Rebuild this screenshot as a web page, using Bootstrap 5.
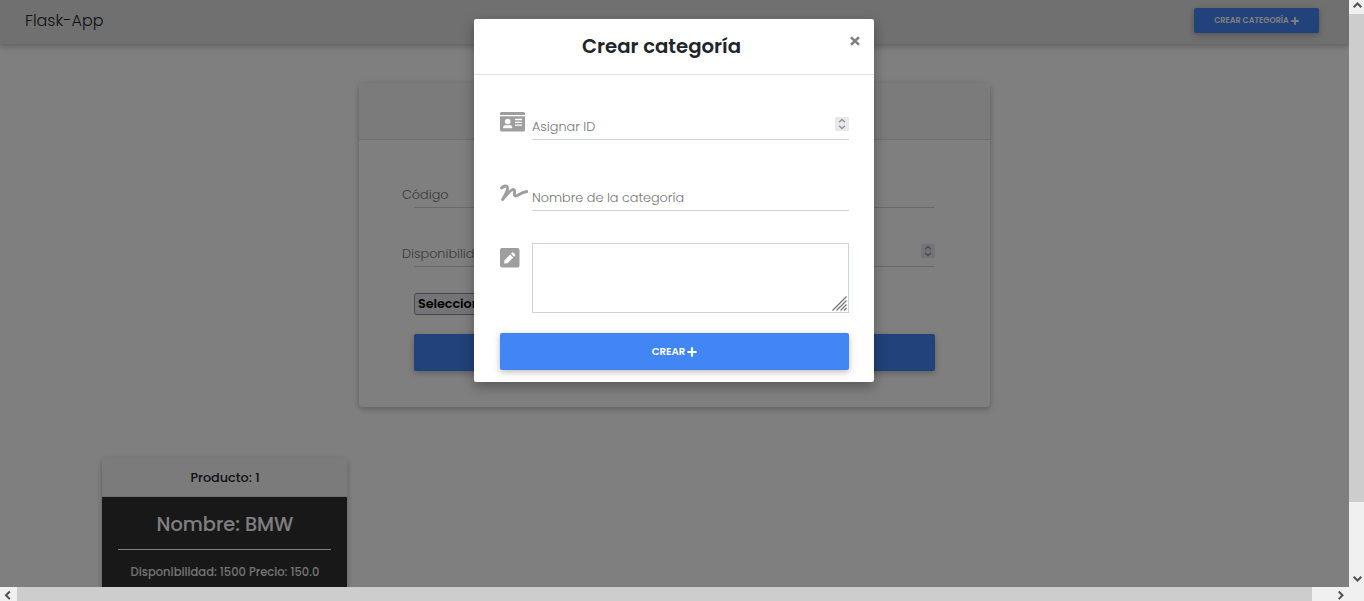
<!DOCTYPE html>
<html lang="es">
<head>
<meta charset="utf-8">
<meta name="viewport" content="width=device-width, initial-scale=1">
<title>Flask-App</title>
<link href="https://cdn.jsdelivr.net/npm/bootstrap@5.3.0/dist/css/bootstrap.min.css" rel="stylesheet">
<style>
  html, body { height: 100%; overflow: hidden; }
  body { font-family: Poppins, Inter, sans-serif; font-size: 12.8px; line-height: 1.5; font-weight: 300; color: #212529; background: #fff; }
  .shell { display: grid; grid-template-columns: 1fr 15px; grid-template-rows: 1fr 14px; height: 601px; }
  .view { position: relative; overflow: hidden; min-width: 0; min-height: 0; }
  .topbar { height: 44px; background: #e0e0e0; padding: 0 30px 3px 25px; box-shadow: 0 2px 5px rgba(0,0,0,.16), 0 2px 10px rgba(0,0,0,.12); }
  .topbar .navbar-brand { font-size: 16px; color: #212529; padding: 0; line-height: 24px; }
  .btn-blue { background: #4285f4; color: #fff; border: 0; border-radius: 2px; font-weight: 600; text-transform: uppercase; box-shadow: 0 2px 5px rgba(0,0,0,.16), 0 2px 10px rgba(0,0,0,.12); display: flex; align-items: center; justify-content: center; gap: 2px; padding: 0; }
  .btn-blue:hover { background: #4285f4; color: #fff; }
  .btn-nav { width: 125px; height: 25px; font-size: 8px; padding-top: 1px; }
  .btn-wide { width: 100%; height: 37px; font-size: 10.2px; }
  .panel { border: 0; border-radius: 4px; box-shadow: 0 2px 5px rgba(0,0,0,.16), 0 2px 10px rgba(0,0,0,.12); }
  .panel > .card-header { background: #f7f7f7; border-bottom: 1px solid #dfdfdf; }
  .form-panel { width: 631px; height: 324px; margin: 39px 0 0 359px; }
  .form-panel > .card-header { height: 57px; }
  .form-panel > .card-body { padding: 42px 55px 0; }
  .line-field { border-bottom: 1px solid #ced4da; height: 26px; color: #757575; display: flex; align-items: center; justify-content: space-between; }
  .line-field span { line-height: 20px; white-space: nowrap; }
  .form-panel .line-field span { margin-left: -12px; }
  .dialog .line-field span { padding-top: 2px; }
  .spin { width: 14px; height: 14px; background: #e9e9ed; flex: none; }
  .choice { height: 22px; width: 140px; border: 1px solid #8f8f9d; border-radius: 3px; background: #e9e9ed; color: #000; font-size: 12.8px; font-weight: 600; letter-spacing: -.08px; padding: 0 3px; line-height: 20px; margin: 26px 0 19px; }
  .product { width: 245px; height: 200px; margin: 51px 0 0 102px; }
  .product > .card-header { height: 39px; padding: 10px 0 8px 1px; font-weight: 500; line-height: 20px; }
  .product > .card-body { background: #303030; color: #fff; padding: 15px 16px; border-radius: 0; }
  .product h4 { font-size: 19.3px; line-height: 26px; font-weight: 500; margin: 0 0 11px; padding-left: 1px; }
  .product .rule { border-top: 1px solid #fff; margin-bottom: 13px; }
  .product p { font-size: 11.52px; line-height: 18px; font-weight: 500; white-space: nowrap; color: #e6e6e6; margin: 0; padding-left: 1px; }
  .shade { position: absolute; inset: 0; background: rgba(0,0,0,.5); padding-right: 1px; }
  .dialog { width: 400px; height: 363px; margin: 19px auto 0; background: #fff; border-radius: 2px; box-shadow: 0 5px 11px rgba(0,0,0,.18), 0 4px 15px rgba(0,0,0,.15); }
  .dialog-head { height: 56px; border-bottom: 1px solid #dee2e6; position: relative; }
  .dialog-head h5 { font-size: 19.7px; font-weight: 600; line-height: 30px; margin: 0; padding: 12px 25px 0 0; text-align: center; }
  .close-x { position: absolute; right: 14px; top: 17px; width: 10px; height: 10px; border: 0; padding: 0; background: none; display: block; }
  .dialog-body { padding: 38px 25px 0 26px; }
  .ico { width: 32px; flex: none; }
  .ico svg, .close-x svg, .spin svg, .btn-blue svg { display: block; }
  .notes { height: 70px; border: 1px solid #ced4da; display: flex; align-items: flex-end; justify-content: flex-end; padding: 1px; }
  .sb { background: #f0f0f0; display: flex; overflow: hidden; }
  .thumb { background: #cdcdcd; }
</style>
</head>
<body>
<div class="shell">
  <div class="view">
    <nav class="topbar d-flex align-items-center justify-content-between">
      <span class="navbar-brand">Flask-App</span>
      <button class="btn btn-blue btn-nav"><span>Crear categoría</span>
        <svg width="8" height="8" viewBox="0 0 10 10"><path d="M5 1.200v7.600M1.200 5h7.600" stroke="#fff" stroke-width="2.400" stroke-linecap="round"/></svg></button>
    </nav>
    <div class="card panel form-panel">
      <div class="card-header"></div>
      <div class="card-body">
        <div class="line-field mb-0"><span>Código</span></div>
        <div class="line-field" style="margin-top:33px"><span>Disponibilidad</span>
          <div class="spin" style="margin-top:-5px"><svg width="14" height="14" viewBox="0 0 14 14" fill="none" stroke="#8f8f9d" stroke-width="1.300"><path d="M4 5.200 7 2.400l3 2.800M4 8.800l3 2.800 3-2.800"/></svg></div></div>
        <div class="choice text-nowrap overflow-hidden">Seleccionar</div>
        <button class="btn btn-blue btn-wide"></button>
      </div>
    </div>
    <div class="card panel product text-center">
      <div class="card-header">Producto: 1</div>
      <div class="card-body">
        <h4>Nombre: BMW</h4>
        <div class="rule"></div>
        <p>Disponibilidad: 1500 Precio: 150.0</p>
      </div>
    </div>
    <div class="shade">
      <div class="dialog">
        <div class="dialog-head">
          <h5>Crear categoría</h5>
          <button class="close-x" aria-label="Cerrar"><svg width="10" height="10" viewBox="0 0 10 10"><path d="M1.900 2.100l6.200 5.800M8.100 2.100L1.900 7.900" stroke="#808080" stroke-width="2.500" stroke-linecap="square"/></svg></button>
        </div>
        <div class="dialog-body">
          <div class="d-flex">
            <div class="ico"><svg width="26" height="20" viewBox="0 0 26 20" style="margin-top:-1px"><path fill="#9e9e9e" d="M1.600 0h22A1.500 1.500 0 0 1 25 1.500V3H0V1.500A1.500 1.500 0 0 1 1.600 0zM0 4.200h25v13.800a1.600 1.600 0 0 1-1.600 1.600H1.600A1.600 1.600 0 0 1 0 18z"/><circle cx="7.700" cy="9.500" r="2.800" fill="#fff"/><path d="M3 16.300c0-2.300 1.200-3.400 2.800-3.400.7.400 3.100.4 3.800 0 1.600 0 2.800 1.100 2.800 3.400z" fill="#fff"/><path d="M15 7.500h7M15 10.300h7M15 13.100h7" stroke="#fff" stroke-width="1.300"/></svg></div>
            <div class="line-field flex-fill" style="height:27px"><span>Asignar ID</span>
              <div class="spin" style="margin-top:-4px"><svg width="14" height="14" viewBox="0 0 14 14" fill="none" stroke="#8f8f9d" stroke-width="1.300"><path d="M4 5.200 7 2.400l3 2.800M4 8.800l3 2.800 3-2.800"/></svg></div></div>
          </div>
          <div class="d-flex" style="margin-top:44px">
            <div class="ico"><svg width="29" height="20" viewBox="0 0 29 20" fill="none" stroke="#9e9e9e" stroke-width="3" stroke-linecap="round" stroke-linejoin="round"><path d="M1.600 4C3 2.300 5.800 1.300 7.200 2.700 8.500 4.500 6 10 2.700 15.400 6.500 10.500 11.500 5 13.800 5.600c2.200.7-.8 5.800 1.200 6.300 2.800.6 4.800-3.200 11.600-4.400"/></svg></div>
            <div class="line-field flex-fill" style="height:27px"><span>Nombre de la categoría</span></div>
          </div>
          <div class="d-flex" style="margin-top:32px">
            <div class="ico"><svg width="20" height="20" viewBox="0 0 20 20" style="margin-top:5px"><rect width="19.500" height="19.500" rx="2" fill="#9e9e9e"/><path fill="#fff" d="M4 15.600l.5-3.400 5.700-5.700 3 3-5.700 5.700zM11 5.700l.9-.9a1.200 1.200 0 0 1 1.700 0l1.300 1.300a1.200 1.200 0 0 1 0 1.700l-.9.9z"/></svg></div>
            <div class="notes flex-fill"><svg width="15" height="15" viewBox="0 0 15 15" stroke="#737373" stroke-width="1.200"><path d="M.5 14.500l14-14M4.500 14.500l10-10M8.500 14.500l6-6M12 14.500l2.500-2.500"/></svg></div>
          </div>
          <button class="btn btn-blue btn-wide" style="margin-top:20px"><span>Crear</span>
            <svg width="10" height="10" viewBox="0 0 10 10"><path d="M5 1.200v7.600M1.200 5h7.600" stroke="#fff" stroke-width="2.200" stroke-linecap="round"/></svg></button>
        </div>
      </div>
    </div>
  </div>
  <div class="sb flex-column align-items-center">
    <svg width="15" height="14" viewBox="0 0 15 14" class="flex-shrink-0" fill="none" stroke="#505050" stroke-width="2"><path d="M4.700 7.300 8.500 3.500l3.800 3.800"/></svg>
    <div class="thumb w-100" style="height:488px"></div>
    <svg width="15" height="14" viewBox="0 0 15 14" class="mt-auto flex-shrink-0" fill="none" stroke="#505050" stroke-width="2"><path d="M4.700 3.700 8.500 7.500l3.800-3.800"/></svg>
  </div>
  <div class="sb">
    <svg width="17" height="14" viewBox="0 0 17 14" class="flex-shrink-0" fill="none" stroke="#505050" stroke-width="2"><path d="M9.800 4.500 6 8.300l3.800 3.800"/></svg>
    <div class="thumb" style="width:1295px"></div>
    <svg width="17" height="14" viewBox="0 0 17 14" class="ms-auto flex-shrink-0" fill="none" stroke="#505050" stroke-width="2"><path d="M6.700 4.500l3.800 3.800-3.800 3.800"/></svg>
  </div>
  <div class="sb"></div>
</div>
<script src="https://cdn.jsdelivr.net/npm/bootstrap@5.3.0/dist/js/bootstrap.bundle.min.js"></script>
</body>
</html>
